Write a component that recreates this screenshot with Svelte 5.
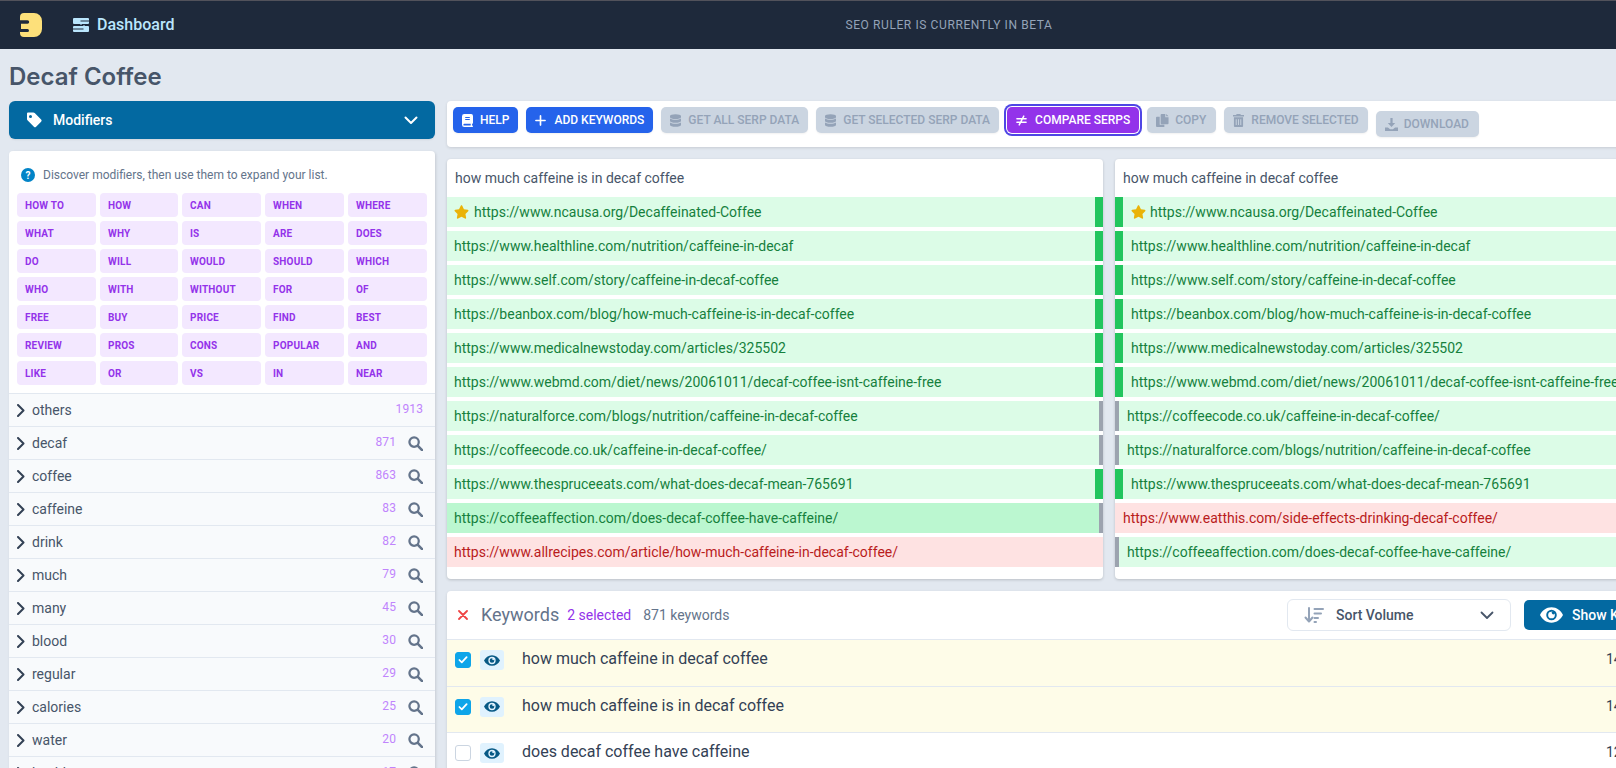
<script>
  const tiles = ['HOW TO','HOW','CAN','WHEN','WHERE','WHAT','WHY','IS','ARE','DOES','DO','WILL','WOULD','SHOULD','WHICH','WHO','WITH','WITHOUT','FOR','OF','FREE','BUY','PRICE','FIND','BEST','REVIEW','PROS','CONS','POPULAR','AND','LIKE','OR','VS','IN','NEAR'];
  const tree = [['others',1913],['decaf',871],['coffee',863],['caffeine',83],['drink',82],['much',79],['many',45],['blood',30],['regular',29],['calories',25],['water',20],['health',17]];
  const left = [
    ['https://www.ncausa.org/Decaffeinated-Coffee','match',true],
    ['https://www.healthline.com/nutrition/caffeine-in-decaf','match'],
    ['https://www.self.com/story/caffeine-in-decaf-coffee','match'],
    ['https://beanbox.com/blog/how-much-caffeine-is-in-decaf-coffee','match'],
    ['https://www.medicalnewstoday.com/articles/325502','match'],
    ['https://www.webmd.com/diet/news/20061011/decaf-coffee-isnt-caffeine-free','match'],
    ['https://naturalforce.com/blogs/nutrition/caffeine-in-decaf-coffee','moved'],
    ['https://coffeecode.co.uk/caffeine-in-decaf-coffee/','moved'],
    ['https://www.thespruceeats.com/what-does-decaf-mean-765691','match'],
    ['https://coffeeaffection.com/does-decaf-coffee-have-caffeine/','moved strong'],
    ['https://www.allrecipes.com/article/how-much-caffeine-in-decaf-coffee/','gone']
  ];
  const right = [
    ['https://www.ncausa.org/Decaffeinated-Coffee','match',true],
    ['https://www.healthline.com/nutrition/caffeine-in-decaf','match'],
    ['https://www.self.com/story/caffeine-in-decaf-coffee','match'],
    ['https://beanbox.com/blog/how-much-caffeine-is-in-decaf-coffee','match'],
    ['https://www.medicalnewstoday.com/articles/325502','match'],
    ['https://www.webmd.com/diet/news/20061011/decaf-coffee-isnt-caffeine-free','match'],
    ['https://coffeecode.co.uk/caffeine-in-decaf-coffee/','moved'],
    ['https://naturalforce.com/blogs/nutrition/caffeine-in-decaf-coffee','moved'],
    ['https://www.thespruceeats.com/what-does-decaf-mean-765691','match'],
    ['https://www.eatthis.com/side-effects-drinking-decaf-coffee/','gone'],
    ['https://coffeeaffection.com/does-decaf-coffee-have-caffeine/','moved']
  ];
  const serps = [
    { title: 'how much caffeine is in decaf coffee', rows: left, side: 'first' },
    { title: 'how much caffeine in decaf coffee', rows: right, side: 'second' }
  ];
  const keywords = [
    ['how much caffeine in decaf coffee', '14', true],
    ['how much caffeine is in decaf coffee', '14', true],
    ['does decaf coffee have caffeine', '12', false]
  ];
</script>

{#snippet database()}
  <svg class="ic" viewBox="0 0 448 512" width="11" height="13"><path fill="currentColor" d="M448 73v46c0 40-100 73-224 73S0 159 0 119V73C0 33 100 0 224 0s224 33 224 73zm0 103v103c0 40-100 73-224 73S0 319 0 279V176c48 33 136 49 224 49s176-16 224-49zm0 160v103c0 40-100 73-224 73S0 479 0 439V336c48 33 136 49 224 49s176-16 224-49z"/></svg>
{/snippet}
{#snippet eye(w, h)}
  <svg class="eyeglyph" viewBox="0 0 24 16" width={w} height={h}><path fill="currentColor" fill-rule="evenodd" d="M12 0C6.500 0 2.300 3.400 0 8c2.300 4.600 6.500 8 12 8s9.700-3.400 12-8c-2.300-4.600-6.500-8-12-8zm0 13.500A5.500 5.500 0 1 1 12 2.500a5.500 5.500 0 0 1 0 11zM12 4.500a3.500 3.500 0 1 0 3.500 3.500c0-.6-.1-1.100-.4-1.600a1.500 1.500 0 1 1-2-2c-.3.100-.7.100-1.100.1z"/></svg>
{/snippet}
{#snippet star()}
  <svg class="star" viewBox="0 0 576 512" width="15" height="14"><path fill="#eab308" d="M259 18l-65 132-146 21c-26 4-37 36-18 55l106 103-25 146c-5 26 23 46 46 34l131-69 131 69c23 12 51-8 46-34l-25-146 106-103c19-19 8-51-18-55l-146-21-65-132c-12-24-46-24-58 0z"/></svg>
{/snippet}

<div class="app">
  <div class="page">
    <header class="top">
      <svg class="logo" viewBox="0 0 22 24" width="22" height="24"><path fill="#fde07a" d="M4 0H14a8 8 0 0 1 8 8v8a8 8 0 0 1-8 8H4a4 4 0 0 1-4-4v-1h7.500a1.500 1.500 0 0 0 0-3H1v-5.300h6.500a1.700 1.700 0 0 0 0-3.400H0V4a4 4 0 0 1 4-4z"/></svg>
      <a class="nav" href="#top">
        <svg viewBox="0 0 16 14" width="16" height="14"><path fill="currentColor" d="M1 0h6V-.500h2V0h6a1 1 0 0 1 1 1v4a1 1 0 0 1-1 1H9v.500H7V6H1a1 1 0 0 1-1-1V1a1 1 0 0 1 1-1zM1 8h9v-.500h2V8h3a1 1 0 0 1 1 1v4a1 1 0 0 1-1 1h-3v.500h-2V14H1a1 1 0 0 1-1-1V9a1 1 0 0 1 1-1z"/><path d="M7.500 3H16M0 11h10.500" stroke="#1e293b" stroke-width="1" fill="none"/></svg>
        <span>Dashboard</span>
      </a>
      <div class="beta">SEO RULER IS CURRENTLY IN BETA</div>
    </header>

    <h1>Decaf Coffee</h1>

    <div class="columns">
      <aside>
        <button class="modifiers">
          <svg viewBox="0 0 16 16" width="16" height="16"><path fill="#fff" d="M1 1.500A1 1 0 0 1 2 .500h5.300a2 2 0 0 1 1.400.6l6.400 6.400a1.600 1.600 0 0 1 0 2.200l-5 5a1.600 1.600 0 0 1-2.200 0L1.500 8.300A2 2 0 0 1 1 7zM4.500 3a1.500 1.500 0 1 0 0 3 1.500 1.500 0 0 0 0-3z"/></svg>
          <span>Modifiers</span>
          <svg class="chev" viewBox="0 0 14 9" width="14" height="9"><path d="M1.500 1.500L7 7l5.500-5.500" fill="none" stroke="#fff" stroke-width="2" stroke-linecap="round" stroke-linejoin="round"/></svg>
        </button>
        <section class="modcard">
          <p class="discover"><span class="q">?</span>Discover modifiers, then use them to expand your list.</p>
          <div class="tiles">
            {#each tiles as t}<div class="tile">{t}</div>{/each}
          </div>
          <ul class="tree">
            {#each tree as [name, n], i}
              <li>
                <svg class="tchev" viewBox="0 0 8 13" width="8" height="13"><path d="M1 1l5.500 5.500L1 12" fill="none" stroke="#334155" stroke-width="2" stroke-linecap="round" stroke-linejoin="round"/></svg>
                <span class="tname">{name}</span>
                <span class="tnum">{n}</span>
                {#if i > 0}
                  <svg class="search" viewBox="0 0 16 16" width="15" height="15"><circle cx="6.500" cy="6.500" r="5" fill="none" stroke="#64748b" stroke-width="2.400"/><path d="M10.500 10.500L15 15" stroke="#64748b" stroke-width="2.800" stroke-linecap="round"/></svg>
                {/if}
              </li>
            {/each}
          </ul>
        </section>
      </aside>

      <main>
        <div class="toolbar">
          <button class="btn blue help">
            <svg viewBox="0 0 12 14" width="11" height="13"><path fill="currentColor" fill-rule="evenodd" d="M2.500 0H10a2 2 0 0 1 2 2v7.500a1.500 1.500 0 0 1-1 1.400v1.600h.3a.750.750 0 0 1 0 1.500H2.500A2.500 2.500 0 0 1 0 11.500v-9A2.500 2.500 0 0 1 2.500 0zm0 10.500a1 1 0 0 0 0 2h7v-2zM3.500 3.200v1.100h5V3.200zm0 2.200v1.100h5V5.400z"/></svg>
            HELP
          </button>
          <button class="btn blue add">
            <svg viewBox="0 0 12 12" width="11" height="11"><path d="M6 1v10M1 6h10" stroke="currentColor" stroke-width="1.800" stroke-linecap="round"/></svg>
            ADD KEYWORDS
          </button>
          <button class="btn off db">{@render database()}GET ALL SERP DATA</button>
          <button class="btn off db">{@render database()}GET SELECTED SERP DATA</button>
          <button class="btn purple">
            <svg viewBox="0 0 12 12" width="11" height="11"><path d="M1 4.200h10M1 7.800h10M8.500 1.200L3.500 10.800" stroke="currentColor" stroke-width="1.600" stroke-linecap="round"/></svg>
            COMPARE SERPS
          </button>
          <button class="btn off copy">
            <svg viewBox="0 0 14 14" width="13" height="13"><path fill="currentColor" d="M6 0h4v3.500h3.500V10a1 1 0 0 1-1 1H6a1 1 0 0 1-1-1V1a1 1 0 0 1 1-1zM11 0l2.500 2.500H11zM1 3h3v8.500h5V14H1a1 1 0 0 1-1-1V4a1 1 0 0 1 1-1z"/></svg>
            COPY
          </button>
          <button class="btn off remove">
            <svg viewBox="0 0 12 14" width="11" height="13"><path fill="currentColor" fill-rule="evenodd" d="M4 0h4l.6 1H12v1.500H0V1h3.400zM1 3.500h10V13a1 1 0 0 1-1 1H2a1 1 0 0 1-1-1zM3 5.500v6.500h1V5.500zm2.500 0v6.500h1V5.500zm2.500 0v6.500h1V5.500z"/></svg>
            REMOVE SELECTED
          </button>
          <button class="btn off dl">
            <svg viewBox="0 0 14 14" width="13" height="13"><path fill="currentColor" d="M5.800 0h2.400v5.500H11L7 9.800 3 5.500h2.800zM0 10.200h3.200L5.500 12h3l2.300-1.800H14V14H0z"/></svg>
            DOWNLOAD
          </button>
        </div>

        <div class="serps">
          {#each serps as s}
            <section class="serp {s.side}">
              <div class="serp-title">{s.title}</div>
              {#each s.rows as [url, kind, starred]}
                <div class="row {kind}">
                  <span class="rtext">{#if starred}{@render star()}{/if}{url}</span>
                </div>
              {/each}
            </section>
          {/each}
        </div>

        <section class="kw">
          <div class="kw-head">
            <svg class="x" viewBox="0 0 10 10" width="10" height="10"><path d="M1 1l8 8M9 1l-8 8" stroke="#ef4444" stroke-width="1.800" stroke-linecap="round"/></svg>
            <span class="kw-title">Keywords</span>
            <span class="kw-sel">2 selected</span>
            <span class="kw-count">871 keywords</span>
            <div class="sort">
              <svg class="sorticon" viewBox="0 0 20 16" width="20" height="16"><path d="M5 1v13M1.500 10.500L5 14.500l3.500-4" fill="none" stroke="#94a3b8" stroke-width="2" stroke-linecap="round" stroke-linejoin="round"/><path d="M10.500 2H19M10.500 6.500H17M10.500 11H14M10.500 15h1.500" stroke="#94a3b8" stroke-width="2" stroke-linecap="round"/></svg>
              <span>Sort Volume</span>
              <svg class="chev" viewBox="0 0 14 9" width="14" height="9"><path d="M1.500 1.500L7 7l5.500-5.500" fill="none" stroke="#475569" stroke-width="1.800" stroke-linecap="round" stroke-linejoin="round"/></svg>
            </div>
            <button class="show">{@render eye(23, 16)}<span>Show Keywords</span></button>
          </div>
          {#each keywords as [text, vol, on]}
            <div class="kw-row" class:on>
              <span class="check" class:on>
                {#if on}<svg viewBox="0 0 12 10" width="10" height="8"><path d="M1.500 5l3 3 6-6.500" fill="none" stroke="#fff" stroke-width="2.200" stroke-linecap="round" stroke-linejoin="round"/></svg>{/if}
              </span>
              <span class="eyebtn">{@render eye(16, 11)}</span>
              <span class="kw-text">{text}</span>
              <span class="kw-vol">{vol}</span>
            </div>
          {/each}
        </section>
      </main>
    </div>
  </div>
</div>

<style>
  :global(body) { margin: 0; background: #e2e8f0; }
  * { box-sizing: border-box; }
  .app { width: 1616px; height: 768px; overflow: hidden; background: #e2e8f0; font-family: Roboto, "Liberation Sans", sans-serif; }
  .page { width: 1900px; }
  .top { height: 49px; background: #1e293b; border-top: 1px solid #52525b; display: flex; align-items: center; padding-left: 20px; position: relative; }
  .logo { flex: none; }
  .nav { display: flex; align-items: center; gap: 8px; margin: -1px 0 0 31px; color: #bae6fd; font-size: 16px; font-weight: 500; text-decoration: none; }
  .beta { margin-left: 671px; font-size: 12px; letter-spacing: .6px; color: #94a3b8; }
  h1 { margin: 0; height: 52px; padding: 15px 0 0 9px; font-family: Inter, sans-serif; font-size: 24px; line-height: 26px; font-weight: 600; color: #475569; }
  .columns { display: flex; align-items: flex-start; gap: 12px; padding-left: 9px; }
  aside { width: 426px; flex: none; }
  .modifiers { width: 100%; height: 38px; border: 0; border-radius: 6px; background: #0369a1; color: #fff; display: flex; align-items: center; padding: 0 17px; font: 500 14px Roboto, sans-serif; box-shadow: 0 1px 2px rgba(0,0,0,.08); }
  .modifiers span { margin-left: 11px; }
  .modifiers .chev { margin-left: auto; }
  .modcard { margin-top: 12px; background: #fff; border-radius: 4px 4px 0 0; box-shadow: 1px 1px 3px rgba(0,0,0,.12); }
  .discover { margin: 0; height: 42px; padding: 6px 0 0 12px; display: flex; align-items: center; font-size: 12px; color: #64748b; }
  .q { width: 14px; height: 14px; border-radius: 50%; background: #0284c7; color: #fff; font-size: 10px; font-weight: 700; display: flex; align-items: center; justify-content: center; margin-right: 8px; }
  .tiles { display: grid; grid-template-columns: 79px 78px 79px 79px 79px; gap: 4px; padding: 0 8px 8px; height: 200px; align-content: start; }
  .tile { height: 24px; background: #f3e8ff; border-radius: 4px; color: #9333ea; font-size: 10px; font-weight: 700; line-height: 24px; padding: 1px 0 0 8px; letter-spacing: .2px; }
  .tree { list-style: none; margin: 0; padding: 0; }
  li { height: 33px; background: #f8fafc; border-top: 1px solid #e2e8f0; display: flex; align-items: center; padding-left: 8px; color: #475569; font-size: 14px; }
  .tchev { flex: none; margin-top: 1px; }
  .tname { margin-left: 7px; }
  .tnum { margin-left: auto; font-size: 12px; color: #c084fc; margin-top: -3px; letter-spacing: .1px; }
  li:first-child .tnum { margin-right: 12px; }
  .search { flex: none; width: 15px; margin: 0 12px 0 12px; }
  main { width: 1450px; flex: none; }
  .toolbar { height: 46px; background: #fff; border-radius: 4px 0 0 4px; display: flex; gap: 8px; align-items: flex-start; padding: 6px 0 0 6px; box-shadow: 0 1px 3px rgba(0,0,0,.12); }
  .btn { height: 26px; border: 0; border-radius: 5px; display: flex; align-items: center; padding: 0 9px; gap: 8px; font: 500 12px Roboto, sans-serif; white-space: nowrap; box-shadow: 0 1px 2px rgba(0,0,0,.06); }
  .help { gap: 7px; }
  .db { gap: 7px; }
  .blue { background: #2563eb; color: #fff; }
  .off { background: #cbd5e1; color: #94a3b8; }
  .purple { background: #9333ea; color: #fff; box-shadow: 0 0 0 1px #fff, 0 0 0 3px #4f46e5; }
  .copy { gap: 6px; padding-right: 10px; }
  .remove { gap: 7px; }
  .dl { margin-top: 4px; gap: 6px; padding-right: 10px; }
  .serps { display: grid; grid-template-columns: 656px 657px; gap: 12px; margin-top: 12px; }
  .serp { height: 420px; background: #fff; border-radius: 4px; box-shadow: 0 1px 3px rgba(0,0,0,.18); }
  .serp-title { height: 38px; padding: 0 8px; display: flex; align-items: center; font-size: 14px; color: #475569; }
  .row { height: 30px; margin-bottom: 4px; background: #dcfce7; color: #15803d; font-size: 14px; display: flex; align-items: center; padding-left: 7px; }
  .star { vertical-align: -2px; margin-right: 5px; }
  .second .star { margin-right: 4px; }
  .rtext { white-space: nowrap; }
  .row.strong { background: #bbf7d0; }
  .row.gone { background: #fee2e2; color: #b91c1c; }
  .second .row { padding-left: 8px; }
  .first .row.match { border-right: 8px solid #22c55e; }
  .first .row.moved { border-right: 4px solid #9ca3af; }
  .second .row.match { border-left: 8px solid #22c55e; }
  .second .row.moved { border-left: 4px solid #9ca3af; }
  .kw { margin-top: 12px; background: #fff; border-radius: 4px 0 0 0; box-shadow: 0 1px 3px rgba(0,0,0,.12); }
  .kw-head { height: 48px; display: flex; align-items: center; padding-left: 11px; position: relative; }
  .kw-title { margin: -2px 0 0 13px; font-size: 18px; color: #64748b; }
  .kw-sel { margin-left: 8px; font-size: 14px; color: #9333ea; }
  .kw-count { margin-left: 12px; font-size: 14px; color: #64748b; }
  .sort { position: absolute; left: 840px; top: 8px; width: 224px; height: 32px; border: 1px solid #e2e8f0; border-radius: 6px; display: flex; align-items: center; padding: 0 16px; font-size: 14px; font-weight: 500; color: #475569; background: #fff; }
  .sort span { margin-left: 12px; }
  .sort .chev { margin-left: auto; }
  .show { position: absolute; left: 1077px; top: 9px; height: 30px; width: 160px; border: 0; border-radius: 5px; background: #0369a1; color: #fff; display: flex; align-items: center; padding: 0 16px; gap: 9px; font: 500 14px Roboto, sans-serif; white-space: nowrap; }
  .eyeglyph { flex: none; }
  .kw-row { height: 46.5px; border-top: 1px solid #e2e8f0; display: flex; align-items: flex-start; padding: 11px 0 0 8px; position: relative; color: #334155; font-size: 16px; }
  .kw-row.on { background: #fefce8; }
  .check { width: 16px; height: 16px; margin-top: 1px; border-radius: 3px; border: 1px solid #cbd5e1; background: #fff; display: flex; align-items: center; justify-content: center; flex: none; }
  .check.on { background: #0ea5e9; border-color: #0ea5e9; }
  .eyebtn { width: 24px; height: 20px; margin-left: 9px; margin-top: -1px; background: #e0f2fe; border-radius: 3px; color: #075985; display: flex; align-items: center; justify-content: center; flex: none; }
  .kw-text { margin: -1px 0 0 18px; line-height: 17px; }
  .kw-vol { position: absolute; left: 1159px; top: 11px; line-height: 17px; font-size: 14px; }
</style>
